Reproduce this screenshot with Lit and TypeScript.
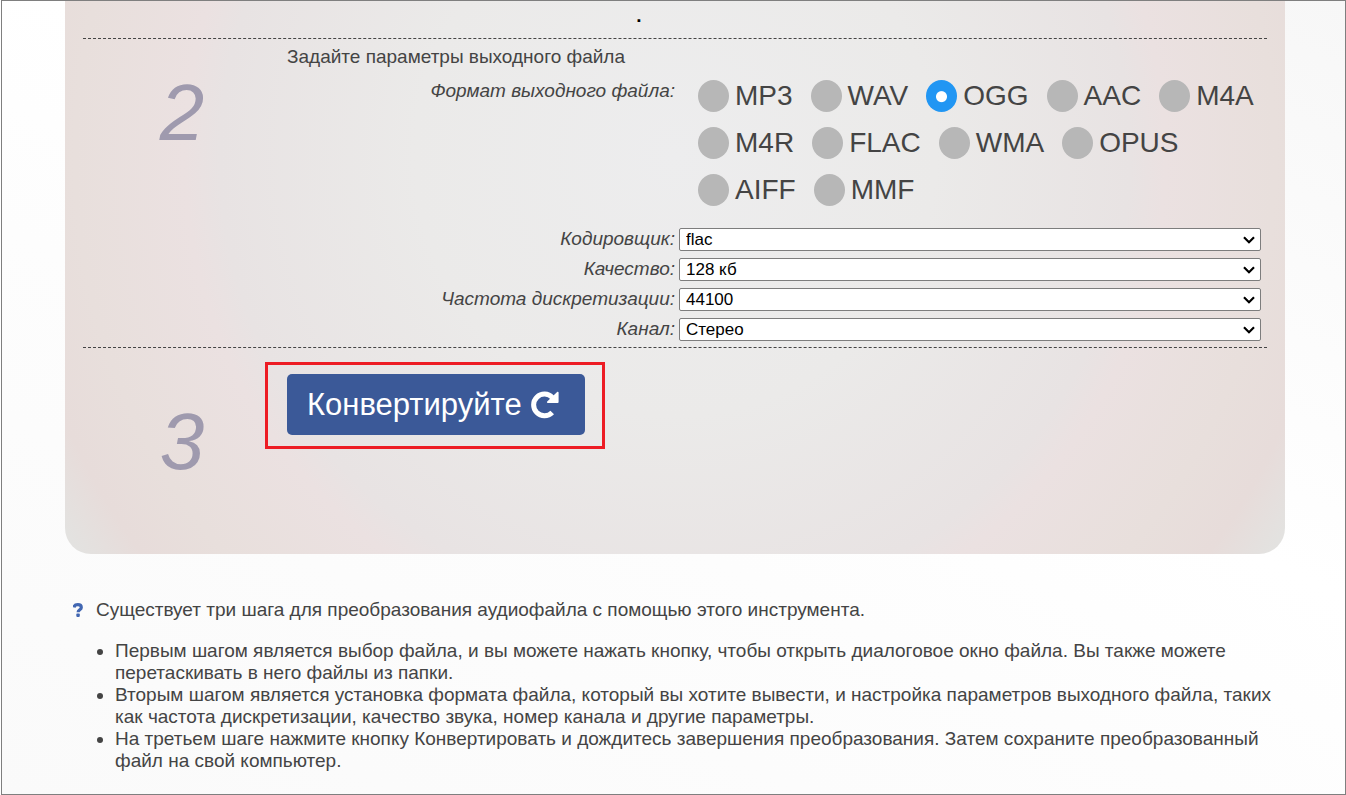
import { LitElement, html, css, svg } from "lit";
import { customElement, state } from "lit/decorators.js";

const FORMATS = ["MP3", "WAV", "OGG", "AAC", "M4A", "M4R", "FLAC", "WMA", "OPUS", "AIFF", "MMF"];

const SETTINGS = [
  { id: "encoder", label: "Кодировщик:", value: "flac" },
  { id: "quality", label: "Качество:", value: "128 кб" },
  { id: "rate", label: "Частота дискретизации:", value: "44100" },
  { id: "channel", label: "Канал:", value: "Стерео" },
];

const STEPS = [
  "Первым шагом является выбор файла, и вы можете нажать кнопку, чтобы открыть диалоговое окно файла. Вы также можете перетаскивать в него файлы из папки.",
  "Вторым шагом является установка формата файла, который вы хотите вывести, и настройка параметров выходного файла, таких как частота дискретизации, качество звука, номер канала и другие параметры.",
  "На третьем шаге нажмите кнопку Конвертировать и дождитесь завершения преобразования. Затем сохраните преобразованный файл на свой компьютер.",
];

const rotateIcon = html`<svg class="rotate" viewBox="0 0 28 28" aria-hidden="true">
  ${svg`<path d="M21.2 21.4A10.8 10.8 0 1 1 21.4 6.6" fill="none" stroke="currentColor" stroke-width="5"/>
  <path d="M27.6 1.6V11a.9.9 0 0 1-.9.9H16.8c-.8 0-1.2-.9-.6-1.5L26.1 1c.6-.6 1.5-.2 1.5.6z" fill="currentColor"/>`}
</svg>`;

@customElement("app-root")
export class AppRoot extends LitElement {
  @state() private format = "OGG";

  static styles = css`
    :host {
      display: block;
      padding-left: 1px;
      background: #fff;
      color: #444;
      font: 19px/22px "Liberation Sans", Arial, sans-serif;
    }
    .page {
      box-sizing: border-box;
      min-height: 100vh;
      border: 1px solid #7f7f7f;
      background: linear-gradient(205deg, #f7f7f7 0%, #fbfbfb 20%, #fff 42%, #fdfdfd 60%, #fafafa 100%);
    }
    .panel {
      margin: 0 60px 0 63px;
      padding: 0 18px 18px;
      border-radius: 0 0 26px 26px;
      background: radial-gradient(
        circle at 50% 28%,
        #ededee 0,
        #ebeae9 260px,
        #e8e3e3 455px,
        #ebe1e1 490px,
        #e8dfdc 600px,
        #e7dcda 665px,
        #e3e2e0 715px
      );
    }
    .tail {
      height: 37px;
      padding-right: 72px;
      box-sizing: border-box;
      text-align: center;
      line-height: 30px;
      font-weight: bold;
      color: #000;
    }
    .step {
      display: grid;
      grid-template-columns: 198px 1fr;
      column-gap: 6px;
      border-top: 1px dashed #444;
    }
    .number {
      padding-top: 34px;
      text-align: center;
      font-size: 80px;
      line-height: 80px;
      font-style: italic;
      color: #9f9aae;
    }
    .step.last {
      min-height: 188px;
    }
    .last .number {
      align-self: center;
      padding-top: 0;
    }
    .body {
      padding: 7px 6px 6px 0;
    }
    .last .body {
      padding-top: 26px;
    }
    h2 {
      margin: 0 0 12px;
      font: inherit;
    }
    .params {
      display: grid;
      grid-template-columns: 2fr 3fr;
      gap: 7px 4px;
    }
    .caption {
      text-align: right;
      font-style: italic;
    }
    .formats {
      display: flex;
      flex-wrap: wrap;
      gap: 15px 18px;
      padding: 0 0 15px 19px;
    }
    .option {
      display: flex;
      align-items: center;
      gap: 6px;
      font-size: 28px;
      line-height: 32px;
    }
    .option input {
      appearance: none;
      width: 31px;
      height: 32px;
      margin: 0;
      border-radius: 50%;
      background: #b7b7b7;
    }
    .option input:checked {
      background: radial-gradient(circle at 50% 52%, #fff 5px, #2196f3 6px);
    }
    select {
      appearance: none;
      width: 100%;
      height: 23px;
      box-sizing: border-box;
      padding: 0 24px 0 6px;
      border: 1px solid #7d7d7d;
      border-radius: 2px;
      background: #fff
        url("data:image/svg+xml,%3Csvg xmlns='http://www.w3.org/2000/svg' width='12' height='8'%3E%3Cpath d='M1 1.3l5 5 5-5' fill='none' stroke='black' stroke-width='2.2'/%3E%3C/svg%3E")
        no-repeat right 5px center;
      color: #000;
      font: 17px "Liberation Sans", Arial, sans-serif;
    }
    .action {
      position: relative;
      display: inline-block;
    }
    .action::after {
      content: "";
      position: absolute;
      inset: -12px -20px -14px -22px;
      border: 3px solid #ed1c24;
      pointer-events: none;
    }
    .convert {
      display: flex;
      align-items: center;
      gap: 9px;
      height: 61px;
      padding: 0 26px 0 20px;
      border: 0;
      border-radius: 5px;
      background: #3b5998;
      color: #fff;
      font: 31px "Liberation Sans", Arial, sans-serif;
    }
    .rotate {
      width: 28px;
      height: 28px;
    }
    .help {
      padding: 45px 66px 22px 71px;
    }
    .intro {
      display: flex;
      align-items: center;
      gap: 13px;
      margin: 0 0 19px;
    }
    .question {
      width: 10px;
      height: 14px;
      color: #4267b2;
    }
    .steps {
      margin: 0;
      padding: 0 0 0 24px;
      list-style: none;
    }
    .steps li {
      display: grid;
      grid-template-columns: 6px 1fr;
      column-gap: 12px;
    }
    .steps li::before {
      content: "";
      width: 6px;
      height: 6px;
      margin-top: 9px;
      border-radius: 50%;
      background: #444;
    }
  `;

  render() {
    return html`
      <main class="page">
        <section class="panel">
          <div class="tail">.</div>
          <div class="step">
            <div class="number">2</div>
            <div class="body">
              <h2>Задайте параметры выходного файла</h2>
              <div class="params">
                <span class="caption" id="format-label">Формат выходного файла:</span>
                <div class="formats" role="radiogroup" aria-labelledby="format-label">
                  ${FORMATS.map(
                    (name) => html`<label class="option">
                      <input
                        type="radio"
                        name="format"
                        .value=${name}
                        .checked=${this.format === name}
                        @change=${() => (this.format = name)}
                      />${name}</label
                    >`
                  )}
                </div>
                ${SETTINGS.map(
                  (s) => html`<label class="caption" for=${s.id}>${s.label}</label>
                    <select id=${s.id}>
                      <option>${s.value}</option>
                    </select>`
                )}
              </div>
            </div>
          </div>
          <div class="step last">
            <div class="number">3</div>
            <div class="body">
              <div class="action">
                <button class="convert" type="button">Конвертируйте ${rotateIcon}</button>
              </div>
            </div>
          </div>
        </section>
        <section class="help">
          <p class="intro">
            <svg class="question" viewBox="0 0 10 14" aria-hidden="true">
              <path
                d="M1 4.4C1.3 2.4 2.8 1.7 4.8 1.7c2.1 0 3.5 1 3.5 2.7 0 2.4-3.2 2.2-3.2 4.8"
                fill="none"
                stroke="currentColor"
                stroke-width="3.2"
              />
              <rect x="3.3" y="10.6" width="3.5" height="3.3" rx=".8" fill="currentColor" />
            </svg>
            Существует три шага для преобразования аудиофайла с помощью этого инструмента.
          </p>
          <ul class="steps">
            ${STEPS.map((text) => html`<li>${text}</li>`)}
          </ul>
        </section>
      </main>
    `;
  }
}
